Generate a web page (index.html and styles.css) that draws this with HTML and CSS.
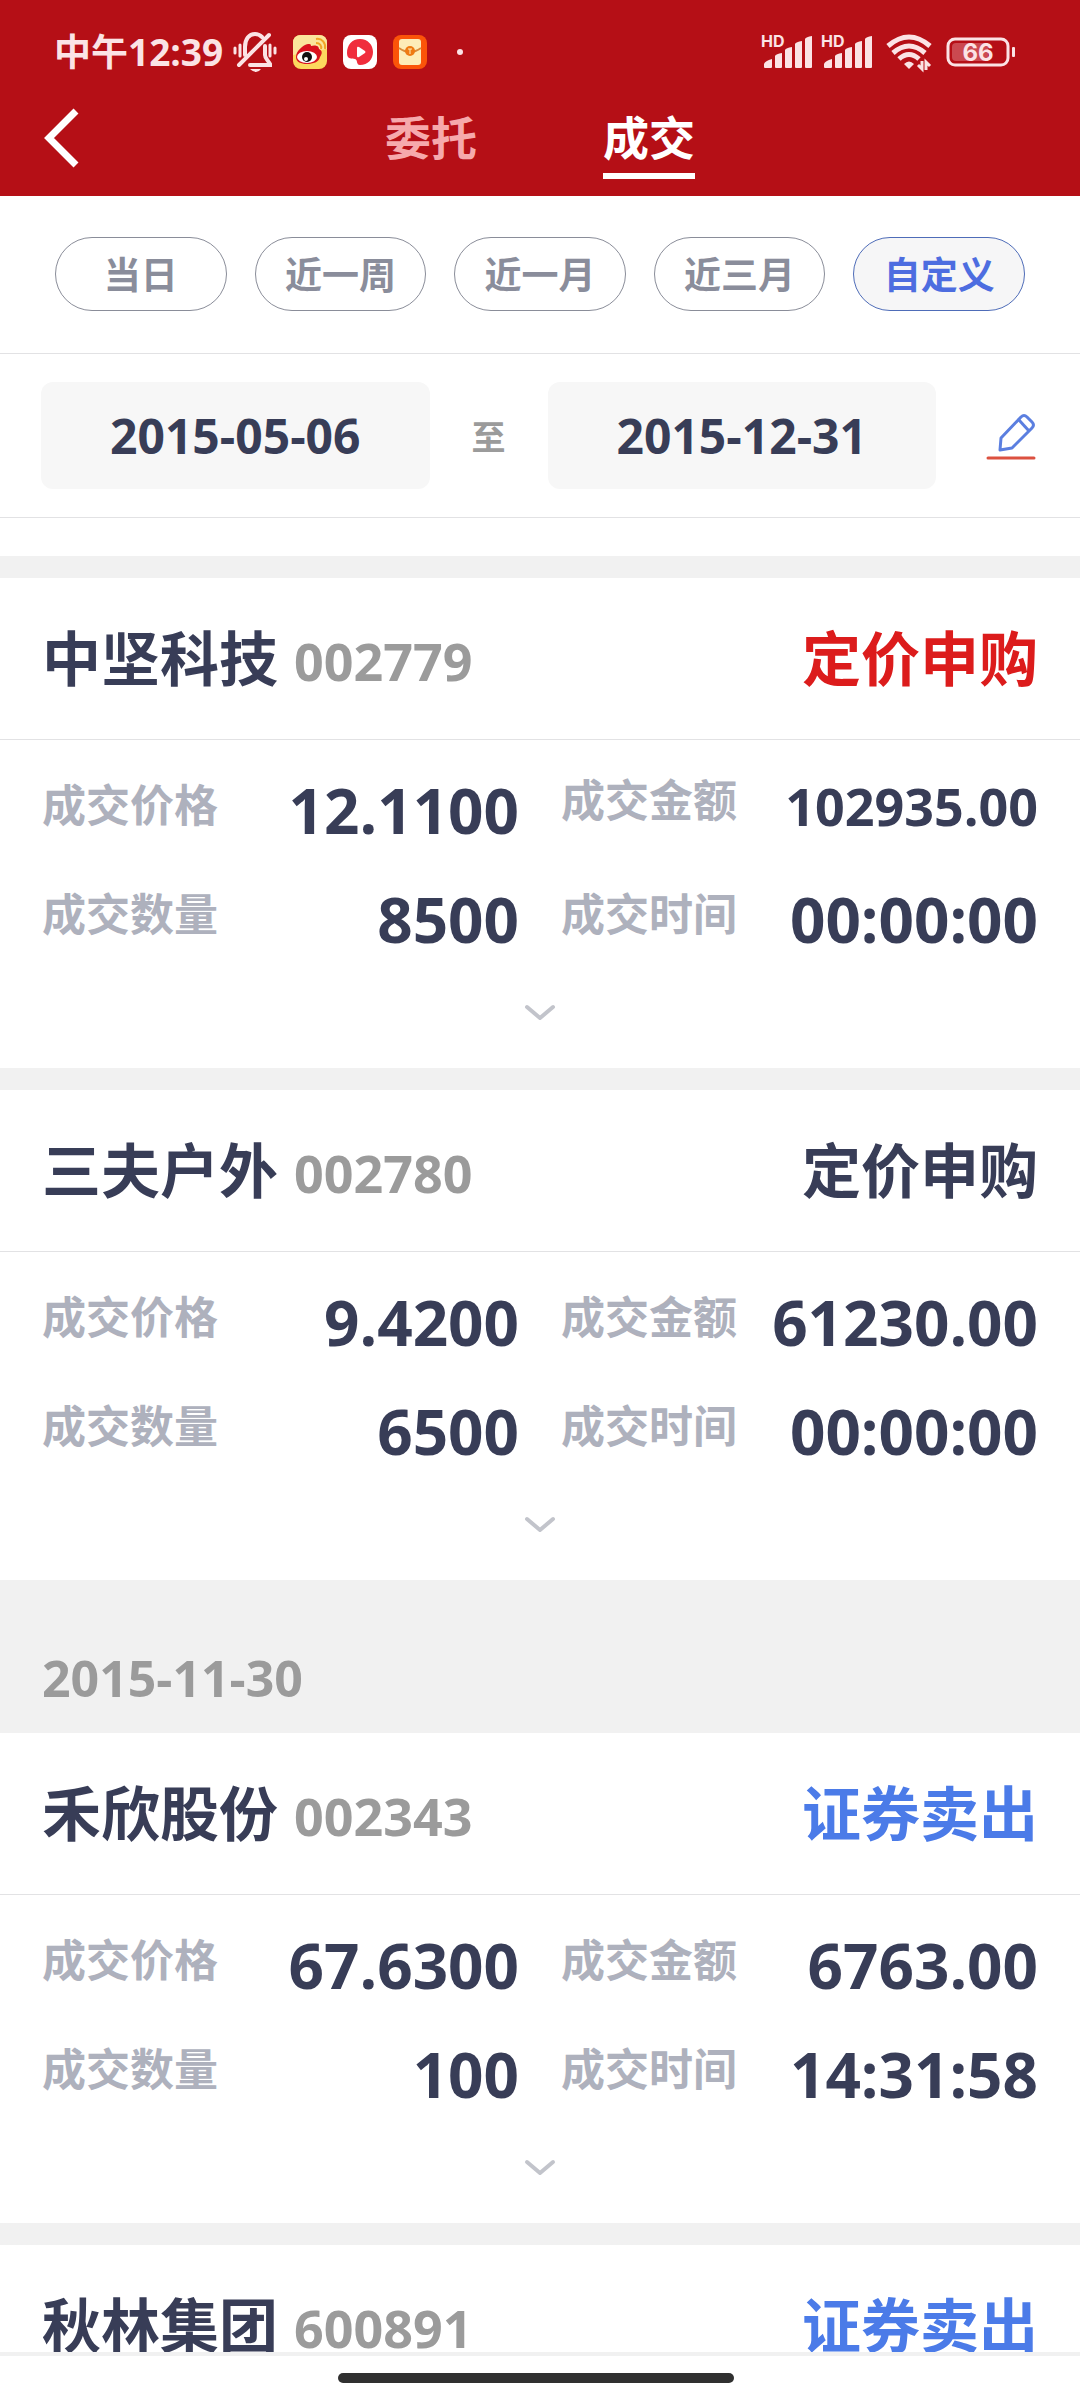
FILE: index.html
```html
<!DOCTYPE html>
<html lang="zh-CN">
<head>
    <meta charset="UTF-8">
    <meta name="viewport" content="width=device-width, initial-scale=1.0">
    <title>历史成交</title>
    <link rel="stylesheet" href="styles.css">
</head>
<body>
<header class="header">
    <div class="status-bar">
        <span class="clock">中午12:39</span>
        <svg class="bell" viewBox="0 0 44 40" width="44" height="40" fill="none" stroke="#fbe3e5" stroke-width="4" stroke-linecap="round">
            <path d="M2 16v5M7 13v11M37 13v11M42 16v5" stroke-width="3"/>
            <path d="M12 23v-8C12 7 16 2 22 2c3 0 5 1 7 3M32 14v9c0 3 2 4 5 9v1H17M6 33L36 3"/>
            <path d="M17 37h11q-2 3-5 3t-6-3z" fill="#fbe3e5" stroke="none"/>
        </svg>
        <svg class="app-icon" viewBox="0 0 34 34" width="34" height="34">
            <rect width="34" height="34" rx="8" fill="#fdd85e"/>
            <path d="M0 8q0-8 8-8h18q8 0 8 8v6L0 20z" fill="#fbe59c"/>
            <path d="M3 22c0-6 7-12 12-13 2 0 3 0 3 2 3-1 8-1 8 3 4 2 3 5 1 8-1 5-7 7-13 7S3 27 3 22z" fill="#d9121d"/>
            <ellipse cx="14" cy="22" rx="10" ry="6" fill="#fff"/>
            <circle cx="14" cy="22" r="5" fill="#111"/>
            <circle cx="13" cy="24" r="2" fill="#fff"/>
            <path d="M23 4c6-1 10 4 9 10M23 8c4 0 6 3 5 6" fill="none" stroke="#f2a626" stroke-width="2"/>
        </svg>
        <svg class="app-icon" viewBox="0 0 34 34" width="34" height="34">
            <rect width="34" height="34" rx="8" fill="#fff"/>
            <path d="M4 18C4 10 9 4 17 4s13 6 13 13-5 13-13 13c-4 0-2-5-5-6s-8 1-8-6z" fill="#f02d3c"/>
            <path d="M14 13q0-2 2-1l6 4q1 1 0 2l-6 4q-2 1-2-1z" fill="#fff"/>
        </svg>
        <svg class="app-icon" viewBox="0 0 34 34" width="34" height="34">
            <rect width="34" height="34" rx="8" fill="#fb5409"/>
            <rect x="6" y="4" width="22" height="26" rx="3" fill="#fdecb8"/>
            <path d="M6 13q11 8 22 0" fill="none" stroke="#d98a3a" stroke-width="2"/>
            <circle cx="17" cy="16" r="5" fill="#ef7a12"/>
            <path d="M15 14h4M17 14v5" stroke="#fdecb8" stroke-width="1"/>
        </svg>
        <span class="more-dot"></span>
        <div class="system-icons">
            <svg class="signal" viewBox="0 0 50 34" width="50" height="34">
                <path d="M2 29q1-3 8-5v8q0 1-1 1H3q-1 0-1-1zM13 21q1-2 7-3v14q0 1-1 1h-5q-1 0-1-1zM23 15q1-2 7-3v20q0 1-1 1h-5q-1 0-1-1zM33 9q1-2 7-3v26q0 1-1 1h-5q-1 0-1-1zM43 4q1-2 7-3v31q0 1-1 1h-5q-1 0-1-1z"/>
                <text x="-1" y="12">HD</text>
            </svg>
            <svg class="signal" viewBox="0 0 50 34" width="50" height="34">
                <path d="M2 29q1-3 8-5v8q0 1-1 1H3q-1 0-1-1zM13 21q1-2 7-3v14q0 1-1 1h-5q-1 0-1-1zM23 15q1-2 7-3v20q0 1-1 1h-5q-1 0-1-1zM33 9q1-2 7-3v26q0 1-1 1h-5q-1 0-1-1zM43 4q1-2 7-3v31q0 1-1 1h-5q-1 0-1-1z"/>
                <text x="-1" y="12">HD</text>
            </svg>
            <svg class="wifi" viewBox="0 0 46 36" width="46" height="36" fill="none" stroke="#fbe3e5" stroke-width="5">
                <path d="M2 12Q23-6 44 12M7 19Q23 5 39 19M13 25Q23 16 33 25"/>
                <path d="M18 30q5-5 10 0l-5 5z" fill="#fbe3e5" stroke="none"/>
                <path d="M36 27v8l-4-4M40 36v-8l4 4" stroke-width="3"/>
            </svg>
            <svg class="battery" viewBox="0 0 70 30" width="70" height="30">
                <rect x="2" y="2" width="60" height="26" rx="7" fill="none" stroke="#fbe3e5" stroke-width="3"/>
                <rect x="6" y="6" width="36" height="18" rx="4" fill="#cb4950"/>
                <rect x="66" y="10" width="3" height="10" rx="1" fill="#fbe3e5"/>
                <text x="32" y="24" text-anchor="middle">66</text>
            </svg>
        </div>
    </div>
    <nav class="nav">
        <button class="back-btn" aria-label="返回">
            <svg viewBox="0 0 36 60" width="36" height="60"><path d="M32 3L5 30l27 27" fill="none" stroke="#fff" stroke-width="7"/></svg>
        </button>
        <div class="tabs">
            <a class="tab" href="#">委托</a>
            <a class="tab active" href="#">成交</a>
        </div>
    </nav>
</header>

<div class="ranges">
    <button class="range">当日</button>
    <button class="range">近一周</button>
    <button class="range">近一月</button>
    <button class="range">近三月</button>
    <button class="range active">自定义</button>
</div>

<div class="dates">
    <input class="date" type="text" value="2015-05-06" aria-label="开始日期" readonly>
    <span class="to">至</span>
    <input class="date" type="text" value="2015-12-31" aria-label="结束日期" readonly>
    <button class="edit-btn" aria-label="修改日期">
        <svg viewBox="0 0 50 50" width="50" height="50" fill="none" stroke="#5b7fe0" stroke-width="3" stroke-linejoin="round">
            <path d="M14 39l1-12L35 6q3-3 6 0l5 5q3 3 0 6L26 37z"/>
            <path d="M33 9l10 11"/>
            <path d="M2 47h46" stroke="#dc5140" stroke-linecap="round"/>
        </svg>
    </button>
</div>

<main class="list">
    <article class="card">
        <div class="card-head">
            <h2 class="name">中坚科技</h2>
            <span class="code">002779</span>
            <span class="type buy">定价申购</span>
        </div>
        <dl class="details">
            <div class="item"><dt>成交价格</dt><dd>12.1100</dd></div>
            <div class="item small"><dt>成交金额</dt><dd>102935.00</dd></div>
            <div class="item"><dt>成交数量</dt><dd>8500</dd></div>
            <div class="item"><dt>成交时间</dt><dd>00:00:00</dd></div>
        </dl>
        <button class="expand-btn" aria-label="展开">
            <svg viewBox="0 0 32 18" width="32" height="18"><path d="M3 3l13 11L29 3"/></svg>
        </button>
    </article>

    <article class="card">
        <div class="card-head">
            <h2 class="name">三夫户外</h2>
            <span class="code">002780</span>
            <span class="type">定价申购</span>
        </div>
        <dl class="details">
            <div class="item"><dt>成交价格</dt><dd>9.4200</dd></div>
            <div class="item"><dt>成交金额</dt><dd>61230.00</dd></div>
            <div class="item"><dt>成交数量</dt><dd>6500</dd></div>
            <div class="item"><dt>成交时间</dt><dd>00:00:00</dd></div>
        </dl>
        <button class="expand-btn" aria-label="展开">
            <svg viewBox="0 0 32 18" width="32" height="18"><path d="M3 3l13 11L29 3"/></svg>
        </button>
    </article>

    <h3 class="day">2015-11-30</h3>

    <article class="card">
        <div class="card-head">
            <h2 class="name">禾欣股份</h2>
            <span class="code">002343</span>
            <span class="type sell">证券卖出</span>
        </div>
        <dl class="details">
            <div class="item"><dt>成交价格</dt><dd>67.6300</dd></div>
            <div class="item"><dt>成交金额</dt><dd>6763.00</dd></div>
            <div class="item"><dt>成交数量</dt><dd>100</dd></div>
            <div class="item"><dt>成交时间</dt><dd>14:31:58</dd></div>
        </dl>
        <button class="expand-btn" aria-label="展开">
            <svg viewBox="0 0 32 18" width="32" height="18"><path d="M3 3l13 11L29 3"/></svg>
        </button>
    </article>

    <article class="card">
        <div class="card-head">
            <h2 class="name">秋林集团</h2>
            <span class="code">600891</span>
            <span class="type sell">证券卖出</span>
        </div>
    </article>
</main>

<footer class="home-bar"><span class="home-line"></span></footer>
</body>
</html>
```

FILE: styles.css
```css
* {
    box-sizing: border-box;
}

body {
    margin: 0;
    height: 100vh;
    display: flex;
    flex-direction: column;
    background-color: #fff;
    color: #383d57;
    font-family: "Noto Sans CJK SC", sans-serif;
    font-weight: 700;
    overflow: hidden;
}

button {
    padding: 0;
    border: none;
    background: none;
    font: inherit;
    cursor: pointer;
}

svg {
    display: block;
    flex-shrink: 0;
    overflow: visible;
}

/* 数字字体 */
.clock,
.code,
.day,
.item dd {
    font-family: "Open Sans", "Noto Sans CJK SC", sans-serif;
}

/* 顶部 */
.header {
    background-color: #b50f16;
}

.status-bar {
    display: flex;
    align-items: center;
    height: 88px;
    padding: 16px 64px 0 54px;
    color: #fbe3e5;
}

.clock {
    font-size: 37px;
    line-height: 40px;
}

.bell {
    margin-left: 10px;
}

.app-icon {
    margin-left: 16px;
}

.more-dot {
    width: 6px;
    height: 6px;
    margin-left: 30px;
    border-radius: 50%;
    background-color: #fbe3e5;
}

.system-icons {
    display: flex;
    align-items: center;
    gap: 14px;
    margin-left: auto;
}

.signal {
    fill: #fbe3e5;
    font: 700 16px "Inter", sans-serif;
}

.signal + .signal {
    margin-left: -4px;
}

.battery {
    fill: #fbe3e5;
    font: 700 24px "Inter", sans-serif;
}

.nav {
    display: grid;
    grid-template-columns: 1fr auto 1fr;
    height: 108px;
    padding: 0 44px;
}

.back-btn {
    justify-self: start;
    height: 100px;
}

.tabs {
    display: flex;
    gap: 126px;
    align-items: flex-start;
}

.tab {
    height: 91px;
    line-height: 94px;
    font-size: 46px;
    color: #f6a9ac;
    text-decoration: none;
}

.tab.active {
    color: #fff;
    border-bottom: 6px solid #fff;
}

/* 时间范围 */
.ranges {
    display: flex;
    gap: 28px;
    padding: 41px 55px 42px;
    border-bottom: 1px solid #e2e2e4;
}

.range {
    flex: 1;
    height: 74px;
    padding-bottom: 3px;
    border: 1px solid #8a8d99;
    border-radius: 37px;
    font-size: 37px;
    line-height: 68px;
    color: #8a8d9b;
}

.range.active {
    border-color: #4e6cb8;
    background-color: #f6f6f7;
    color: #4d6de0;
}

.dates {
    display: flex;
    align-items: center;
    padding: 28px 44px 28px 41px;
    border-bottom: 1px solid #e2e2e4;
}

.date {
    flex: 1;
    min-width: 0;
    height: 107px;
    padding: 0;
    border: none;
    border-radius: 12px;
    background-color: #f7f7f7;
    color: #383d57;
    font: 700 48px "Open Sans", sans-serif;
    text-align: center;
}

.to {
    width: 118px;
    text-align: center;
    font-size: 34px;
    color: #9b9b9b;
}

.edit-btn {
    margin-left: 50px;
}

/* 成交列表 */
.list {
    flex: 1;
    min-height: 0;
    overflow: hidden;
    padding-top: 38px;
}

.card {
    border-top: 22px solid #f1f1f1;
}

.day + .card {
    border-top: none;
}

.card-head {
    display: flex;
    align-items: baseline;
    height: 162px;
    padding: 0 42px;
    line-height: 156px;
    border-bottom: 1px solid #e2e2e4;
}

.name {
    margin: 0;
    font-size: 59px;
    font-weight: 700;
}

.code {
    margin-left: 16px;
    font-size: 52px;
    color: #9b9b9b;
}

.type {
    margin-left: auto;
    font-size: 59px;
}

.type.buy {
    color: #dc1c1c;
}

.type.sell {
    color: #4b7be8;
}

.details {
    display: grid;
    grid-template-columns: 1fr 1fr;
    column-gap: 42px;
    margin: 0;
    padding: 14px 42px 0;
}

.item {
    display: flex;
    justify-content: space-between;
    height: 109px;
}

.item dt {
    font-size: 44px;
    line-height: 98px;
    color: #aeb1bd;
}

.item dd {
    margin: 0;
    font-size: 62px;
    line-height: 112px;
}

.item.small dt {
    line-height: 88px;
}

.item.small dd {
    font-size: 52px;
    line-height: 104px;
}

.expand-btn {
    display: flex;
    justify-content: center;
    align-items: flex-start;
    width: 100%;
    height: 96px;
    padding-top: 32px;
}

.expand-btn path {
    fill: none;
    stroke: #c2c4cb;
    stroke-width: 4px;
    stroke-linecap: round;
    stroke-linejoin: round;
}

.day {
    margin: 0;
    height: 153px;
    padding: 46px 42px 0;
    background-color: #f1f1f1;
    color: #9b9b9b;
    font-size: 50px;
    font-weight: 700;
    line-height: 104px;
}

/* 底部手势条 */
.home-bar {
    height: 48px;
    border-top: 4px solid #f1f1f1;
    padding: 17px 8px 0 0;
}

.home-line {
    display: block;
    width: 37%;
    height: 10px;
    margin: 0 auto;
    border-radius: 5px;
    background-color: #303030;
}
```
